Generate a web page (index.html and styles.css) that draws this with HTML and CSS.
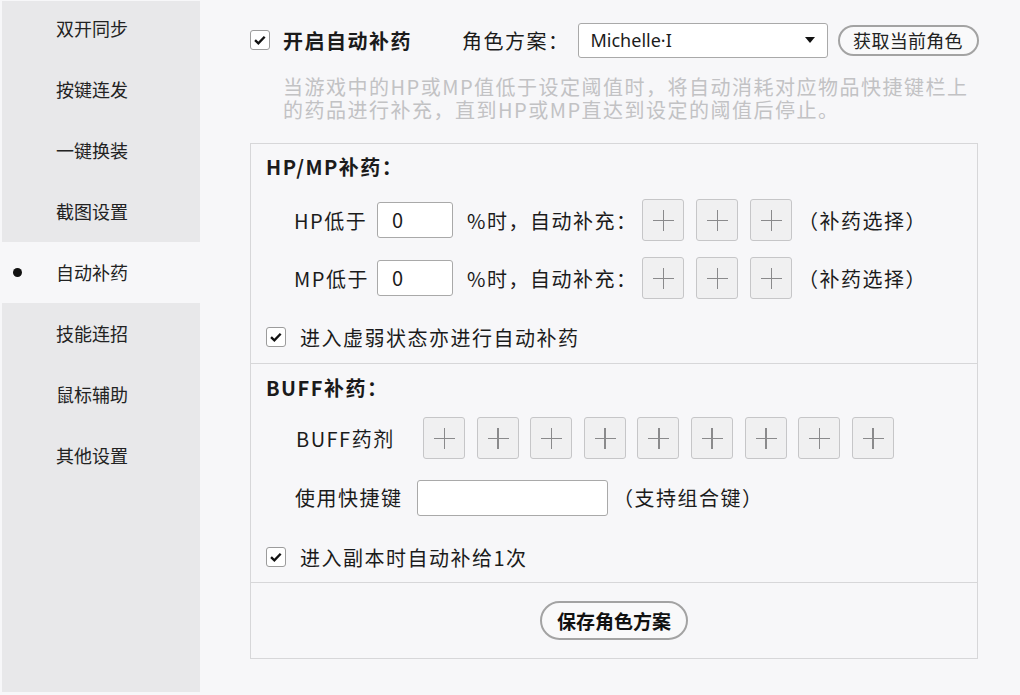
FILE: index.html
```html
<!DOCTYPE html>
<html lang="zh-CN">
<head>
    <meta charset="UTF-8">
    <title>自动补药</title>
    <link rel="stylesheet" href="styles.css">
</head>
<body>
    <div class="app">
        <div class="sidebar">
            <ul class="nav">
                <li>双开同步</li>
                <li>按键连发</li>
                <li>一键换装</li>
                <li>截图设置</li>
                <li class="active">自动补药</li>
                <li>技能连招</li>
                <li>鼠标辅助</li>
                <li>其他设置</li>
            </ul>
        </div>

        <div class="main">
            <div class="top-row">
                <span class="check"><svg width="20" height="20" viewBox="0 0 20 20"><path d="M4.5 10.2 L8.2 13.8 L15.2 6.4" fill="none" stroke="#111" stroke-width="2.6"/></svg></span>
                <span class="enable-label">开启自动补药</span>
                <span class="role-label">角色方案：</span>
                <div class="select">
                    <span class="select-text">Michelle·I</span>
                    <i class="arrow"></i>
                </div>
                <button class="pill">获取当前角色</button>
            </div>
            <div class="desc">
                <div class="desc-line">当游戏中的HP或MP值低于设定阈值时，将自动消耗对应物品快捷键栏上</div>
                <div class="desc-line">的药品进行补充，直到HP或MP直达到设定的阈值后停止。</div>
            </div>

            <div class="panel">
                <div class="section first">
                    <div class="title">HP/MP补药：</div>
                    <div class="row hp">
                        <span class="label">HP低于</span>
                        <div class="input small">0</div>
                        <span class="after">%时，自动补充：</span>
                        <div class="slots">
                            <span class="slot"></span><span class="slot"></span><span class="slot"></span>
                        </div>
                        <span class="hint">（补药选择）</span>
                    </div>
                    <div class="row mp">
                        <span class="label">MP低于</span>
                        <div class="input small">0</div>
                        <span class="after">%时，自动补充：</span>
                        <div class="slots">
                            <span class="slot"></span><span class="slot"></span><span class="slot"></span>
                        </div>
                        <span class="hint">（补药选择）</span>
                    </div>
                    <div class="check-row weak">
                        <span class="check"><svg width="20" height="20" viewBox="0 0 20 20"><path d="M4.5 10.2 L8.2 13.8 L15.2 6.4" fill="none" stroke="#111" stroke-width="2.6"/></svg></span>
                        <span>进入虚弱状态亦进行自动补药</span>
                    </div>
                </div>

                <div class="section second">
                    <div class="title">BUFF补药：</div>
                    <div class="row buff">
                        <span class="label wide">BUFF药剂</span>
                        <div class="slots">
                            <span class="slot"></span><span class="slot"></span><span class="slot"></span>
                            <span class="slot"></span><span class="slot"></span><span class="slot"></span>
                            <span class="slot"></span><span class="slot"></span><span class="slot"></span>
                        </div>
                    </div>
                    <div class="row hotkey">
                        <span class="label key">使用快捷键</span>
                        <div class="input long"></div>
                        <span class="hint">（支持组合键）</span>
                    </div>
                    <div class="check-row dungeon">
                        <span class="check"><svg width="20" height="20" viewBox="0 0 20 20"><path d="M4.5 10.2 L8.2 13.8 L15.2 6.4" fill="none" stroke="#111" stroke-width="2.6"/></svg></span>
                        <span>进入副本时自动补给1次</span>
                    </div>
                </div>

                <div class="section footer">
                    <button class="pill save">保存角色方案</button>
                </div>
            </div>
        </div>
    </div>
</body>
</html>
```

FILE: styles.css
```css
body {
    margin: 0;
    background: #f7f7f9;
    color: #1b1b1b;
    font-family: "Noto Sans CJK SC", "Noto Sans", sans-serif;
}
.app {
    display: flex;
    width: 1020px;
    height: 695px;
    overflow: hidden;
}

/* left menu */
.sidebar {
    width: 198px;
    height: 691px;
    margin: 1px 0 0 2px;
    background: #e8e8ea;
    overflow: hidden;
    flex-shrink: 0;
}
.nav {
    list-style: none;
    margin: -3px 0 0 0;
    padding: 0;
}
.nav li {
    position: relative;
    height: 61px;
    line-height: 60px;
    padding-left: 54px;
    font-size: 18px;
    color: #222;
}
.nav li.active {
    background: #f7f7f9;
}
.nav li.active::before {
    content: "";
    position: absolute;
    left: 11px;
    top: 26px;
    width: 9px;
    height: 9px;
    border-radius: 50%;
    background: #111;
}

/* right side */
.main {
    padding: 22px 0 0 50px;
    font-size: 20px;
    letter-spacing: 1.5px;
}
.check {
    display: inline-flex;
    width: 18px;
    height: 18px;
    border: 1px solid #9c9c9c;
    border-radius: 3px;
    background: #fff;
    align-items: center;
    justify-content: center;
    flex-shrink: 0;
}
.top-row {
    display: flex;
    align-items: center;
    height: 36px;
}
.enable-label {
    margin-left: 13px;
    font-weight: bold;
}
.role-label {
    margin-left: 50px;
}
.select {
    display: flex;
    align-items: center;
    justify-content: space-between;
    box-sizing: border-box;
    width: 250px;
    height: 35px;
    margin-left: 8px;
    padding: 0 12px 0 12px;
    background: #fff;
    border: 1px solid #a9a9a9;
    border-radius: 3px;
    letter-spacing: 0;
}
.select-text {
    font-family: "Noto Sans", sans-serif;
    font-size: 18px;
}
.arrow {
    width: 0;
    height: 0;
    border-left: 5px solid transparent;
    border-right: 5px solid transparent;
    border-top: 6px solid #111;
}
.pill {
    box-sizing: border-box;
    height: 31px;
    width: 141px;
    margin-left: 10px;
    border: 2px solid #a3a3a3;
    border-radius: 16px;
    background: #f9f9fa;
    font-family: inherit;
    font-size: 18px;
    letter-spacing: 0.3px;
    color: #222;
    padding: 0;
}
.desc {
    margin: 17px 0 0 33px;
    color: #c2c2c4;
    white-space: nowrap;
}
.desc-line {
    height: 23px;
    line-height: 23px;
}

.panel {
    box-sizing: border-box;
    width: 728px;
    margin-top: 22px;
    border: 1px solid #d7d7d9;
}
.section {
    padding-left: 15px;
    border-bottom: 1px solid #d7d7d9;
}
.section.footer {
    border-bottom: none;
    display: flex;
    justify-content: center;
    padding: 18px 0 18px 0;
}
.first {
    padding-top: 11px;
    padding-bottom: 14px;
}
.second {
    padding-top: 12px;
    padding-bottom: 13px;
}
.title {
    font-weight: bold;
    line-height: 24px;
}
.row {
    display: flex;
    align-items: center;
    height: 42px;
    margin-left: 28px;
}
.hp { margin-top: 20px; }
.mp { margin-top: 16px; }
.buff { margin-top: 17px; margin-left: 30px; }
.hotkey { margin-top: 17.5px; margin-left: 29px; }
.label {
    width: 83px;
}
.label.wide {
    width: 127px;
}
.label.key {
    width: 122px;
}
.input {
    box-sizing: border-box;
    height: 36px;
    background: #fff;
    border: 1px solid #a9a9a9;
    border-radius: 3px;
    line-height: 34px;
}
.input.small {
    width: 76px;
    padding-left: 14px;
}
.input.long {
    width: 191px;
}
.after {
    width: 175px;
    margin-left: 14px;
}
.slots {
    display: flex;
    gap: 12px;
}
.buff .slots {
    gap: 11.6px;
}
.slot {
    position: relative;
    box-sizing: border-box;
    width: 42px;
    height: 42px;
    background: #f0f0f1;
    border: 1px solid #c6c6c8;
    border-radius: 3px;
}
.slot::before,
.slot::after {
    content: "";
    position: absolute;
    background: #8a8a8c;
}
.slot::before {
    left: 10px;
    top: 19.5px;
    width: 21px;
    height: 1.8px;
}
.slot::after {
    left: 19.5px;
    top: 10px;
    width: 1.8px;
    height: 21px;
}
.hint {
    margin-left: 6px;
}
.hotkey .hint {
    margin-left: 5px;
}
.check-row {
    display: flex;
    align-items: center;
    height: 24px;
}
.check-row .check {
    margin-right: 14px;
}
.weak { margin-top: 26px; }
.dungeon { margin-top: 26.5px; }
.save {
    width: 148px;
    height: 39px;
    margin: 0;
    border-radius: 20px;
    font-weight: bold;
    font-size: 19px;
    letter-spacing: 0;
    color: #111;
}
```
